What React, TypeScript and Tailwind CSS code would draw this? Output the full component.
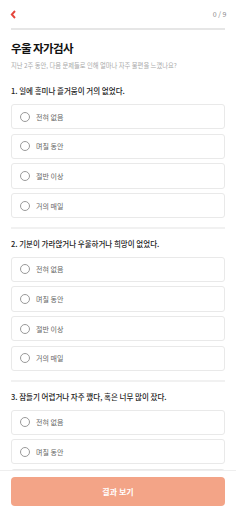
import React from "react"

const questions = [
  "1. 일에 흥미나 즐거움이 거의 없었다.",
  "2. 기분이 가라앉거나 우울하거나 희망이 없었다.",
  "3. 잠들기 어렵거나 자주 깼다, 혹은 너무 많이 잤다.",
]

const options = ["전혀 없음", "며칠 동안", "절반 이상", "거의 매일"]

const font = { fontFamily: '"Noto Sans CJK KR", "Noto Sans", sans-serif' }

function Option({ label }: { label: string }) {
  return (
    <div className="flex h-[25.2px] items-center rounded-[3px] border border-[#e9e9e9] bg-white pl-[8px]">
      <span className="h-[10px] w-[10px] rounded-full border border-[#9a9a9a]" />
      <span className="ml-[6px] text-[7px] leading-[10px] text-[#666]">{label}</span>
    </div>
  )
}

export default function App() {
  return (
    <div className="relative h-[512px] w-[236px] overflow-hidden bg-white" style={font}>
      <div className="pl-[11px] pr-[11.5px]">
        <div className="flex h-[28px] items-center justify-between">
          <svg width="7" height="9" viewBox="0 0 7 9" className="-ml-[1px]">
            <polyline points="5,1 1.8,4.5 5,8" fill="none" stroke="#e5453b" strokeWidth="1.9" />
          </svg>
          <span className="-mr-[2px] text-[7px] leading-[10px] text-[#888]">0 / 9</span>
        </div>
        <div className="h-[2px] bg-[#e6e6e6]" />

        <div className="mt-[10px] text-[11.5px] font-bold leading-[16px] tracking-[-0.6px] text-[#111]">우울 자가검사</div>
        <div className="mt-[5px] text-[6.3px] leading-[10px] text-[#aaa]">
          지난 2주 동안, 다음 문제들로 인해 얼마나 자주 불편을 느꼈나요?
        </div>

        {questions.map((q, i) => (
          <div key={q}>
            {i > 0 && <div className="mt-[8.5px] h-[2.5px] bg-[#f1f1f1]" />}
            <div className={(i === 0 ? "mt-[15px]" : "mt-[9.5px]") + " text-[7.5px] font-medium leading-[10px] text-[#222]"}>
              {q}
            </div>
            <div className="mt-[8px] flex flex-col gap-[4.5px]">
              {options.map((o) => (
                <Option key={o} label={o} />
              ))}
            </div>
          </div>
        ))}
      </div>

      <div className="absolute bottom-0 left-0 right-0 h-[42px] border-t border-[#eeeeee] bg-white px-[11px] pt-[6px]">
        <button className="flex h-[29px] w-full items-center justify-center rounded-[4px] bg-[#f3a487] text-[8px] font-bold text-white">
          결과 보기
        </button>
      </div>
    </div>
  )
}
